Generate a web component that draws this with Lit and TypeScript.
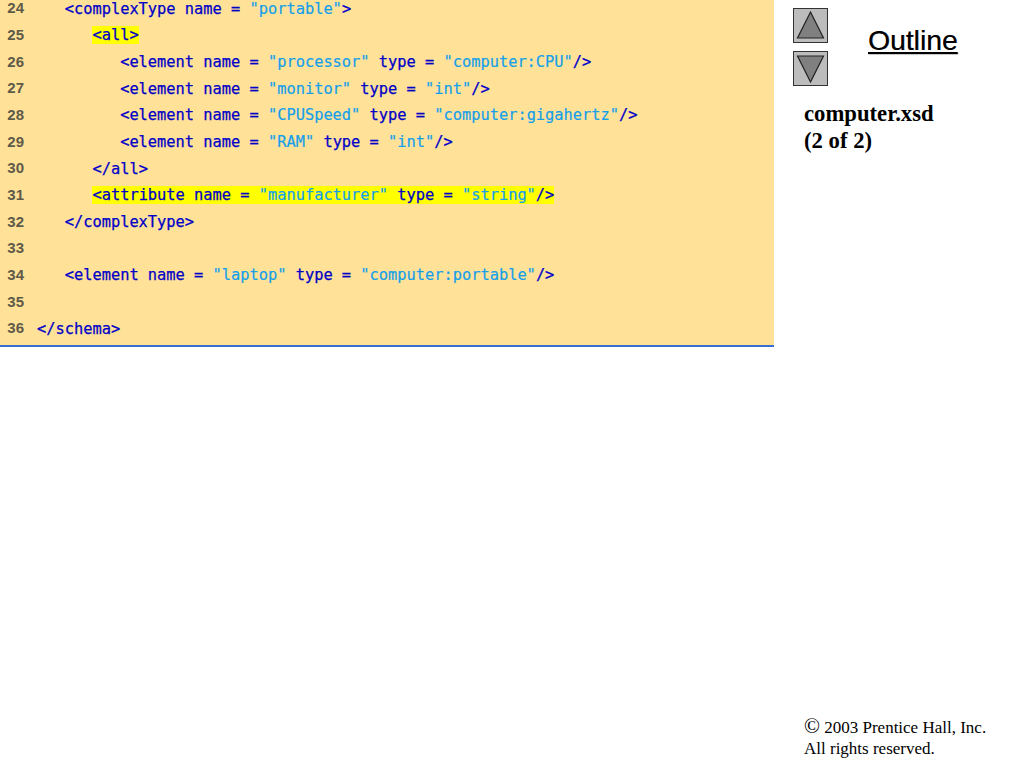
import { LitElement, html, css } from "lit";
import { customElement } from "lit/decorators.js";

type Seg = [string, string?];
const T = (s: string): Seg => [s];
const S = (s: string): Seg => [s, "str"];

const rows: { n: number; indent: number; segs: Seg[]; mark?: boolean }[] = [
  { n: 24, indent: 3, segs: [T("<complexType name = "), S('"portable"'), T(">")] },
  { n: 25, indent: 6, mark: true, segs: [T("<all>")] },
  { n: 26, indent: 9, segs: [T("<element name = "), S('"processor"'), T(" type = "), S('"computer:CPU"'), T("/>")] },
  { n: 27, indent: 9, segs: [T("<element name = "), S('"monitor"'), T(" type = "), S('"int"'), T("/>")] },
  { n: 28, indent: 9, segs: [T("<element name = "), S('"CPUSpeed"'), T(" type = "), S('"computer:gigahertz"'), T("/>")] },
  { n: 29, indent: 9, segs: [T("<element name = "), S('"RAM"'), T(" type = "), S('"int"'), T("/>")] },
  { n: 30, indent: 6, segs: [T("</all>")] },
  { n: 31, indent: 6, mark: true, segs: [T("<attribute name = "), S('"manufacturer"'), T(" type = "), S('"string"'), T("/>")] },
  { n: 32, indent: 3, segs: [T("</complexType>")] },
  { n: 33, indent: 0, segs: [] },
  { n: 34, indent: 3, segs: [T("<element name = "), S('"laptop"'), T(" type = "), S('"computer:portable"'), T("/>")] },
  { n: 35, indent: 0, segs: [] },
  { n: 36, indent: 0, segs: [T("</schema>")] },
];

@customElement("app-root")
export class AppRoot extends LitElement {
  static styles = css`
    :host {
      display: flex;
      width: 1024px;
      height: 768px;
      overflow: hidden;
      background: #fff;
    }
    .panel {
      width: 774px;
      height: 347px;
      flex: none;
      box-sizing: border-box;
      background: #ffe298;
      border-bottom: 2px solid #3a6fd0;
      overflow: hidden;
    }
    .list {
      margin-top: -4px;
      display: grid;
      grid-auto-rows: 26.67px;
    }
    .row {
      display: flex;
      align-items: center;
    }
    .num {
      width: 24px;
      flex: none;
      padding-bottom: 3px;
      text-align: right;
      font: bold 15px "Liberation Sans", sans-serif;
      color: #5f5a48;
    }
    .code {
      margin-left: 13px;
      font: 15.35px "DejaVu Sans Mono", monospace;
      -webkit-text-stroke: 0.25px currentColor;
      color: #0000c8;
      white-space: pre;
      line-height: 17px;
    }
    .mark {
      background: #ffff00;
    }
    .str {
      color: #149fea;
      -webkit-text-stroke: 0.2px currentColor;
    }
    .side {
      flex: 1;
      display: flex;
      flex-direction: column;
      padding: 8px 0 9px 19px;
    }
    .head {
      display: flex;
      gap: 40px;
    }
    .arrows {
      display: flex;
      flex-direction: column;
      gap: 8px;
    }
    .arrows svg {
      display: block;
      width: 35px;
      height: 35px;
    }
    .outline {
      font: 28.3px/32px "Liberation Sans", sans-serif;
      color: #000;
      text-decoration: underline;
      text-shadow: 0.4px 0.4px 0 #777;
      margin-top: 16px;
    }
    .title {
      margin: 14px 0 0 11px;
      font: bold 22.7px/27px "Liberation Serif", serif;
      color: #000;
    }
    .copy {
      margin: auto 0 0 11px;
      font: 17px/21px "Liberation Serif", serif;
      color: #000;
    }
    .cr {
      font-size: 21px;
      line-height: 0;
    }
  `;

  private arrow(up: boolean) {
    const points = up ? "17.5,4 30.5,30 4.5,30" : "17.5,31 30.5,5 4.5,5";
    return html`<svg viewBox="0 0 35 35" aria-hidden="true">
      <rect x="0.5" y="0.5" width="34" height="34" fill="#bcbcbc" stroke="#333"></rect>
      <polygon points=${points} fill="#808080" stroke="#222" stroke-width="1.2"></polygon>
    </svg>`;
  }

  render() {
    return html`
      <div class="panel">
        <div class="list">
          ${rows.map(
            (r) => html`<div class="row">
              <span class="num">${r.n}</span>
              <span class="code">${" ".repeat(r.indent)}<span class=${r.mark ? "mark" : ""}
                >${r.segs.map((s) => html`<span class=${s[1] ?? ""}>${s[0]}</span>`)}</span
              ></span>
            </div>`
          )}
        </div>
      </div>
      <div class="side">
        <div class="head">
          <div class="arrows">${this.arrow(true)}${this.arrow(false)}</div>
          <div class="outline">Outline</div>
        </div>
        <div class="title">computer.xsd<br />(2 of 2)</div>
        <div class="copy"><span class="cr">©</span> 2003 Prentice Hall, Inc.<br />All rights reserved.</div>
      </div>
    `;
  }
}
